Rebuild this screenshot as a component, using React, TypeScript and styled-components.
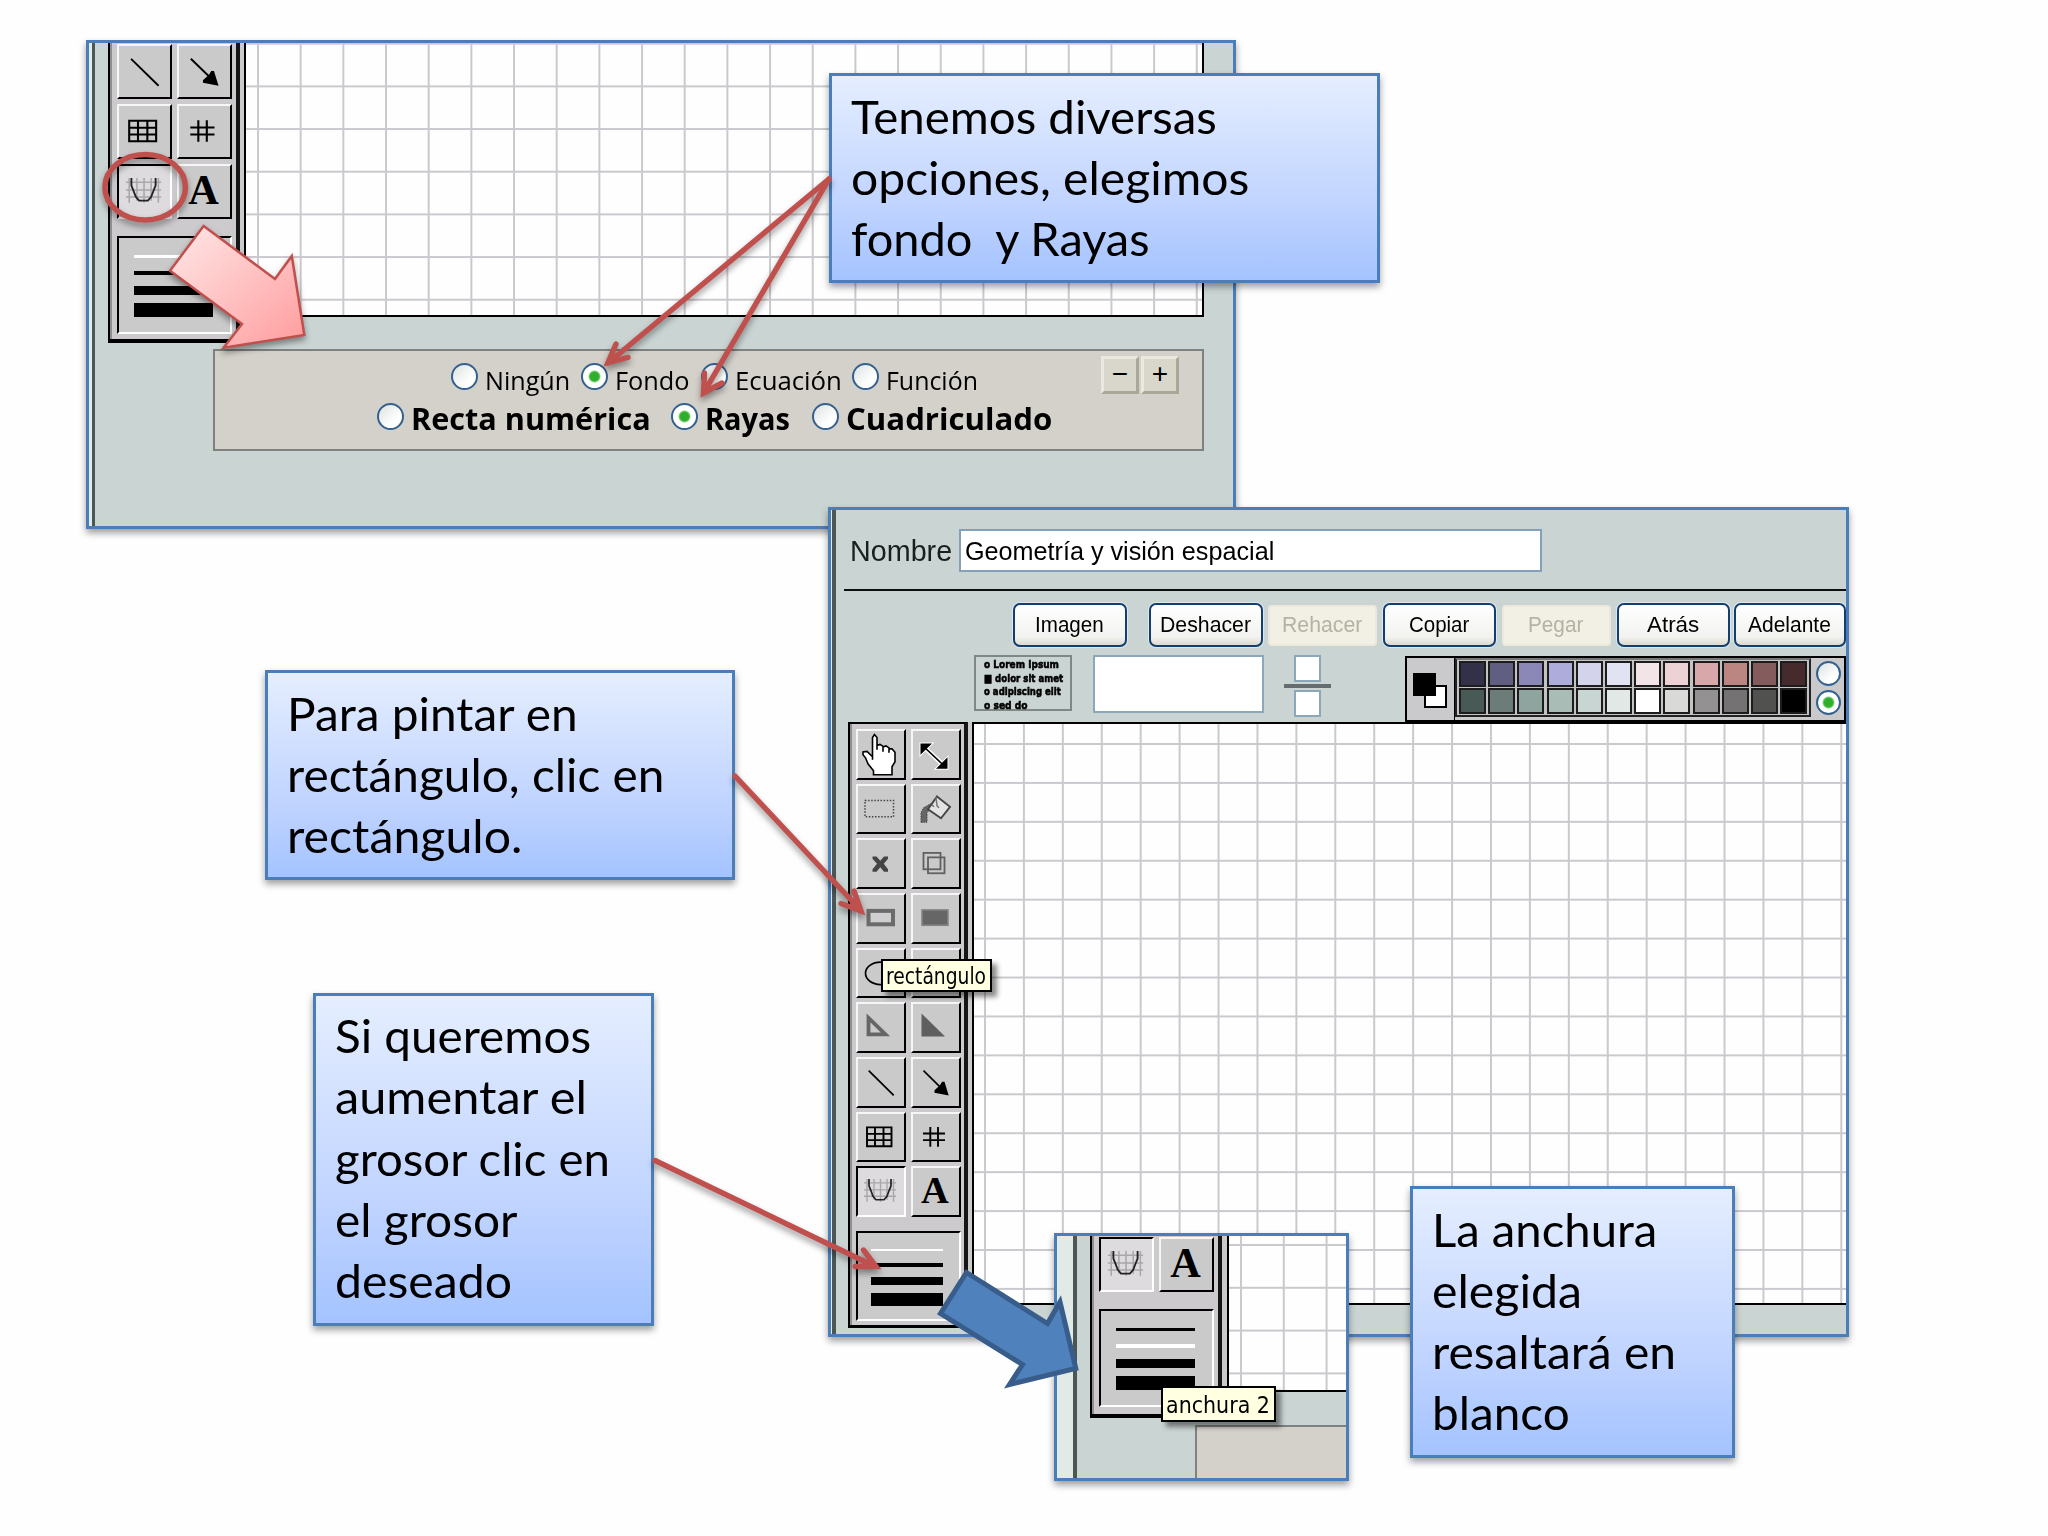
import React, { useLayoutEffect, useRef, useState } from "react";
import styled, { createGlobalStyle, css } from "styled-components";

const GlobalStyle = createGlobalStyle`
  * { box-sizing: border-box; }
  body { margin: 0; background: #fefefe; }
`;

const sans = '"Liberation Sans", Arial, sans-serif';
const humanist = '"Open Sans", "Noto Sans", sans-serif';
const frame = "#4a7ebb";
const red = "#c0504d";

/* ---------- text fitted to a measured width ---------- */

const FitBox = styled.span<{ $w: number }>`
  display: block;
  flex: none;
  width: ${(p) => p.$w}px;
  white-space: pre;
`;

const FitInner = styled.span`
  display: inline-block;
  transform-origin: 0 50%;
`;

function Fit({ w, children }: { w: number; children: string }) {
  const ref = useRef<HTMLSpanElement>(null);
  const [scale, setScale] = useState(1);
  useLayoutEffect(() => {
    const natural = ref.current?.offsetWidth;
    if (natural) setScale(w / natural);
  }, [w, children]);
  return (
    <FitBox $w={w}>
      <FitInner ref={ref} style={{ transform: `scaleX(${scale})` }}>
        {children}
      </FitInner>
    </FitBox>
  );
}

/* ---------- slide and windows ---------- */

const Slide = styled.main`
  position: relative;
  width: 2048px;
  height: 1536px;
  overflow: hidden;
  background: #fefefe;
  color: #000;
  font-family: ${sans};
`;

const Window = styled.section<{ $x: number; $y: number; $w: number; $h: number }>`
  position: absolute;
  left: ${(p) => p.$x}px;
  top: ${(p) => p.$y}px;
  width: ${(p) => p.$w}px;
  height: ${(p) => p.$h}px;
  display: flex;
  border: 3px solid ${frame};
  background: #cad5d3;
  box-shadow: 0 4px 7px rgba(0, 0, 0, 0.38);
  overflow: hidden;
`;

const Rail = styled.div<{ $light: number; $dark: number }>`
  flex: none;
  width: ${(p) => p.$light + p.$dark}px;
  background: #e2eae8;
  border-right: ${(p) => p.$dark}px solid #4b5755;
`;

const Body = styled.div`
  flex: 1;
  min-width: 0;
  display: flex;
  flex-direction: column;
`;

const Workspace = styled.div<{ $pad: number }>`
  flex: none;
  display: flex;
  align-items: flex-start;
  padding-left: ${(p) => p.$pad}px;
`;

const Gutter = styled.div<{ $w: number; $h: number }>`
  flex: none;
  width: ${(p) => p.$w}px;
  height: ${(p) => p.$h}px;
  background: #c9cbca;
`;

const Canvas = styled.div<{
  $w?: number;
  $h: number;
  $pitch: number;
  $ox: number;
  $oy: number;
  $sides: string;
}>`
  ${(p) => (p.$w ? `flex: none; width: ${p.$w}px;` : "flex: 1;")}
  height: ${(p) => p.$h}px;
  border: solid #000;
  border-width: ${(p) => p.$sides};
  background-color: #fefefe;
  background-image: linear-gradient(90deg, #cbc9cd 2px, transparent 2px),
    linear-gradient(#cbc9cd 2px, transparent 2px);
  background-size: ${(p) => p.$pitch}px ${(p) => p.$pitch}px;
  background-position: ${(p) => p.$ox}px 0, 0 ${(p) => p.$oy}px;
`;

/* ---------- toolbox ---------- */

type Size = "full" | "cropped";

const ToolboxFrame = styled.div<{ $size: Size }>`
  flex: none;
  background: #cccacd;
  border: solid #000;
  border-right-color: #151717;
  box-shadow: inset 2px 0 0 #8f8f92;
  ${(p) =>
    p.$size === "full"
      ? css`
          width: 120px;
          height: 606px;
          border-width: 2px 4px 3px 2px;
          padding: 5px 3.5px 0 6px;
        `
      : css`
          width: 132px;
          height: 300px;
          border-width: 0 4px 4px 2px;
          padding: 1px 4.5px 0 7px;
        `}
`;

const ToolGrid = styled.div<{ $size: Size }>`
  display: grid;
  ${(p) =>
    p.$size === "full"
      ? css`
          grid-template-columns: 50px 50px;
          grid-auto-rows: 50.67px;
          gap: 4px 4.5px;
        `
      : css`
          grid-template-columns: 55px 55px;
          grid-auto-rows: 55px;
          gap: 5px 4.5px;
        `}
`;

const ToolButton = styled.button<{ $on?: boolean }>`
  display: block;
  padding: 0;
  border: 2px solid;
  border-color: ${(p) => (p.$on ? "#000 #fff #fff #000" : "#f6f6f6 #000 #000 #f6f6f6")};
  background: ${(p) => (p.$on ? "#dddbde" : "#cacaca")};
  svg {
    display: block;
    margin: -2px -1px -2px -3px;
    width: calc(100% + 4px);
    height: calc(100% + 4px);
  }
`;

const WidthPicker = styled.div<{ $size: Size }>`
  display: flex;
  flex-direction: column;
  align-items: flex-start;
  border: 2px solid;
  border-color: #000 #fff #fff #000;
  background: #cacaca;
  ${(p) =>
    p.$size === "full"
      ? css`
          margin-top: 14px;
          height: 90px;
          padding: 16px 0 0 13px;
          --w: 72px;
          --k: 0.92;
        `
      : css`
          margin-top: 17px;
          height: 98px;
          padding: 17px 0 0 14.5px;
          --w: 79px;
          --k: 1;
        `}
`;

const Stroke = styled.div<{ $h: number; $after: number; $on?: boolean }>`
  flex: none;
  width: var(--w);
  height: calc(${(p) => p.$h}px * var(--k));
  margin-bottom: calc(${(p) => p.$after}px * var(--k));
  background: ${(p) => (p.$on ? "#fff" : "#000")};
`;

const icons: Record<string, React.ReactNode> = {
  hand: (
    <path
      d="M17.5 31V8.5L19.5 5.5L22 8.5V21V16.5L25 15.5L28 17.5V23V18L31 17L34 19V24V20L37 20L40 23.5V33L37 38V46H18.500V42L13 35L10.500 29L8 26V23L12 22.500L17.500 28Z"
      fill="#fff"
      stroke="#000"
      strokeWidth="1.6"
    />
  ),
  resize: (
    <g>
      <path d="M14 18L34 37" stroke="#fff" strokeWidth="4.500" />
      <path d="M10.500 14.500H22L10.500 26ZM37.500 40H26L37.500 28.500Z" fill="#000" stroke="#fff" strokeWidth="2" paintOrder="stroke" />
      <path d="M15 19L33 36" stroke="#000" strokeWidth="1.500" />
    </g>
  ),
  marquee: <rect x="10" y="16.500" width="28.500" height="16.500" fill="none" stroke="#444" strokeWidth="1.500" strokeDasharray="1.500 1.600" />,
  bucket: (
    <g>
      <path d="M11 38.500V29L13.500 24L20.500 20L20 26L17 28.500V38.500Z" fill="#666" stroke="#444" strokeDasharray="1.500 1" />
      <path d="M27 12.500L40 23L31 34.500L18 25.500Z" fill="#e3e3e3" stroke="#444" strokeWidth="1.900" />
      <path d="M26 13L27 22L29 24M22 21L24 23" fill="none" stroke="#777" strokeWidth="1.500" />
    </g>
  ),
  cross: <path d="M17.500 18.500H21.500L25.300 23L29 18.500H33V21L28.800 26L33 31.500V34H29L25.300 29.500L21.500 34H17.500V31.500L22 26L17.500 21Z" fill="#444" />,
  copy: (
    <g fill="none" stroke="#606060" strokeWidth="1.800">
      <rect x="13.500" y="15" width="17" height="16.500" />
      <rect x="18" y="19.500" width="16.500" height="16" />
    </g>
  ),
  rect: <rect x="13.500" y="18" width="24.500" height="13.500" fill="#cfcfcf" stroke="#6b6b6b" strokeWidth="4" />,
  rectFill: <rect x="12" y="17" width="26" height="15.500" fill="#666" stroke="#868686" strokeWidth="1.600" />,
  oval: <ellipse cx="25.500" cy="25.500" rx="15" ry="11.300" fill="none" stroke="#000" strokeWidth="1.700" />,
  ovalFill: <ellipse cx="25.500" cy="25.500" rx="15" ry="11.300" fill="#666" />,
  tri: <path d="M13.500 16V32.700H30.500Z" fill="none" stroke="#666" strokeWidth="3.800" />,
  triFill: <path d="M11.500 11.500V34.700H35Z" fill="#5f5f5f" />,
  line: <path d="M13.700 13.700L38.700 38.700" stroke="#000" strokeWidth="1.700" />,
  arrow: (
    <g>
      <path d="M13.500 13.700L32 32" stroke="#000" strokeWidth="1.700" />
      <path d="M38.700 38.700L24.500 36V33.500L30 28.500L32 25H34.500Z" fill="#000" />
    </g>
  ),
  table: <path d="M12 15.500H36.500V34.500H12ZM20 15V35M28.500 15V35M12 22H37M12 28.300H37" fill="none" stroke="#000" strokeWidth="1.900" />,
  hash: <path d="M20.300 15V35M28 15V35M13 21.700H35M13 28.300H35" fill="none" stroke="#000" strokeWidth="1.900" />,
  curve: (
    <g fill="none">
      <path d="M12 13V36M19 13V34M25.500 13V36M32 13V34M38.500 13V36M9 17H41M9 24H41M9 30.500H41" stroke="#a9a7aa" strokeWidth="1.400" />
      <path d="M14 13V20L16 25L18 30.500L21 34H29L32 30.500L34 25L36 20V13" stroke="#222" strokeWidth="1.700" />
    </g>
  ),
  text: (
    <text x="25" y="37.300" textAnchor="middle" fontFamily='"Liberation Serif", serif' fontWeight="700" fontSize="38.500">
      A
    </text>
  ),
};

const allTools = [
  "hand", "resize", "marquee", "bucket", "cross", "copy", "rect", "rectFill", "oval",
  "ovalFill", "tri", "triFill", "line", "arrow", "table", "hash", "curve", "text",
];

function Toolbox({ size, tools, selected }: { size: Size; tools: string[]; selected: number }) {
  const widths = [
    [2.5, 13],
    [4.5, 10.5],
    [9, 8],
    [14.500, 0],
  ];
  return (
    <ToolboxFrame $size={size}>
      <ToolGrid $size={size}>
        {tools.map((t) => (
          <ToolButton key={t} $on={t === "curve"}>
            <svg viewBox="0 0 50 51" preserveAspectRatio="none">{icons[t]}</svg>
          </ToolButton>
        ))}
      </ToolGrid>
      <WidthPicker $size={size}>
        {widths.map(([h, after], i) => (
          <Stroke key={i} $h={h} $after={after} $on={i === selected} />
        ))}
      </WidthPicker>
    </ToolboxFrame>
  );
}

/* the small window shows only the last row of tools */
const CroppedToolbox = styled.div`
  display: flex;
  flex: none;
  ${ToolboxFrame} {
    height: 182px;
  }
`;

/* ---------- option panel ---------- */

const OptionPanel = styled.div`
  flex: none;
  display: flex;
  width: 991px;
  height: 102px;
  margin: 6px 0 0 118px;
  border: 2px solid #7f8180;
  background: #d4d0ca;
`;

const OptionRows = styled.div`
  flex: none;
  width: 886px;
  padding-top: 5px;
`;

const OptionRow = styled.div<{ $pad: number; $bold?: boolean }>`
  display: flex;
  align-items: center;
  height: 40px;
  padding-left: ${(p) => p.$pad}px;
  font: ${(p) => (p.$bold ? "700 31px" : "400 26px")} / 40px ${humanist};
`;

const Option = styled.label<{ $w: number; $drop: number }>`
  flex: none;
  display: flex;
  align-items: center;
  gap: 7px;
  width: ${(p) => p.$w}px;
  > span:last-child {
    margin-top: ${(p) => p.$drop}px;
  }
`;

const Radio = styled.span<{ $on?: boolean; $d?: number }>`
  flex: none;
  width: ${(p) => p.$d ?? 27}px;
  height: ${(p) => p.$d ?? 27}px;
  border: 2px solid #33618f;
  border-radius: 50%;
  background: ${(p) =>
    p.$on
      ? "radial-gradient(circle, #2fae2a 0 4px, #5cc257 5px, #fff 6.5px)"
      : "linear-gradient(135deg, #dfe2e2, #fff 70%)"};
`;

const Steppers = styled.div`
  display: flex;
  gap: 2px;
  padding-top: 5px;
`;

const Stepper = styled.button`
  width: 38px;
  height: 38px;
  padding: 0 0 3px;
  border: 3px solid;
  border-color: #ebe8df #aaa698 #aaa698 #ebe8df;
  background: #d9d6cb;
  font: 28px / 28px ${sans};
  color: #000;
`;

/* ---------- header of the editor window ---------- */

const NameRow = styled.div`
  flex: none;
  display: flex;
  align-items: center;
  height: 79px;
  padding: 2px 0 0 14px;
  font: 29px ${sans};
  color: #1a1f1e;
  > span {
    padding-top: 2px;
  }
`;

const NameField = styled.div`
  display: flex;
  align-items: center;
  width: 583px;
  height: 43px;
  margin-left: 7px;
  padding: 1px 0 0 4px;
  border: 2px solid #84a0b8;
  background: #fff;
  font-size: 25.500px;
  color: #000;
`;

const Divider = styled.div`
  flex: none;
  height: 2px;
  margin-left: 8px;
  background: #0b0f0e;
`;

const ButtonRow = styled.div`
  flex: none;
  display: flex;
  align-items: center;
  height: 64px;
  padding: 4px 0 0 177px;
`;

const XpButton = styled.button<{ $w: number; $gap: number; $off?: boolean }>`
  flex: none;
  display: flex;
  align-items: center;
  justify-content: center;
  width: ${(p) => p.$w}px;
  height: ${(p) => (p.$off ? 41 : 44)}px;
  margin-left: ${(p) => p.$gap}px;
  padding: 0 2px 0 0;
  border: 2px solid ${(p) => (p.$off ? "#ebe9dc" : "#123f70")};
  border-radius: ${(p) => (p.$off ? 4 : 7)}px;
  background: ${(p) => (p.$off ? "#f2f0e4" : "linear-gradient(#fff, #f2f2ef 80%, #dddacf)")};
  box-shadow: ${(p) => (p.$off ? "none" : "0 0 0 1px rgba(235, 245, 250, 0.6)")};
  color: ${(p) => (p.$off ? "#b4b2a4" : "#000")};
  font: 21.500px / 26px ${sans};
`;

const ToolRow = styled.div`
  flex: none;
  display: flex;
  align-items: flex-start;
  height: 67px;
  padding-left: 138px;
`;

const SampleText = styled.div`
  flex: none;
  width: 98px;
  height: 56px;
  padding: 1px 0 0 8px;
  border: 2px solid #808886;
  font: 700 11px / 13.500px "DejaVu Sans", sans-serif;
  -webkit-text-stroke: 0.6px #000;
`;

const Preview = styled.div`
  flex: none;
  width: 171px;
  height: 58px;
  margin-left: 21px;
  border: 2px solid #8ba7b9;
  background: #fff;
`;

const Fraction = styled.div`
  flex: none;
  display: flex;
  flex-direction: column;
  align-items: center;
  justify-content: space-between;
  width: 47px;
  height: 62px;
  margin-left: 20px;
`;

const FractionBox = styled.div`
  width: 27px;
  height: 27px;
  border: 2px solid #8ba7b9;
  background: #fff;
`;

const FractionBar = styled.div`
  width: 47px;
  height: 4px;
  background: #666d70;
`;

const Palette = styled.div`
  position: relative;
  z-index: 1;
  flex: none;
  display: flex;
  width: 441px;
  height: 68px;
  margin: 1px 0 0 74px;
  border: solid #000;
  border-width: 2px 2px 4px;
  background: #cac9cc;
`;

const InkWell = styled.div`
  flex: none;
  display: flex;
  width: 48px;
  padding: 15px 0 0 6px;
  border-right: 1px solid #000;
`;

const InkChip = styled.div<{ $back?: boolean }>`
  flex: none;
  width: 23px;
  height: 23px;
  border: 2px solid #000;
  background: ${(p) => (p.$back ? "#fff" : "#000")};
  ${(p) => (p.$back ? "margin: 12px 0 0 -12px;" : "position: relative; z-index: 1;")}
`;

const Swatches = styled.div`
  flex: none;
  display: grid;
  grid-template-columns: repeat(12, 27px);
  grid-auto-rows: 26px;
  align-content: start;
  gap: 1px 2.200px;
  width: 356px;
  margin-bottom: 3px;
  padding: 1px 0 0 2px;
  border: 2px solid #222;
  border-top-color: #777;
  background: #c3c3c3;
`;

const Swatch = styled.div<{ $c: string }>`
  border: 2px solid #1c1c1c;
  background: ${(p) => p.$c};
`;

const PaletteModes = styled.div`
  flex: 1;
  display: flex;
  flex-direction: column;
  align-items: center;
  gap: 4px;
  padding: 3px 0 0 1px;
`;

const colors = [
  "#33304a", "#615f81", "#8b88b8", "#aeacda", "#d3d3ec", "#e2e3f2", "#f3e5e7", "#ecd1d5", "#d7a7a9", "#bb8581", "#855c5d", "#452b2d",
  "#495956", "#6c7d79", "#8fa49e", "#a9bcb5", "#c9d5d3", "#e2e8e5", "#ffffff", "#d9dad7", "#949193", "#747273", "#515150", "#000000",
];

const PlainPanel = styled.div`
  flex: 1;
  margin: 7px 0 0 118px;
  border: solid #7f8180;
  border-width: 2px 0 0 2px;
  background: #d4d0ca;
`;

/* ---------- annotations ---------- */

const Callout = styled.aside<{ $x: number; $y: number; $w: number; $h: number }>`
  position: absolute;
  left: ${(p) => p.$x}px;
  top: ${(p) => p.$y}px;
  width: ${(p) => p.$w}px;
  height: ${(p) => p.$h}px;
  padding: 9.500px 0 0 19px;
  border: 3px solid ${frame};
  background: linear-gradient(#e5eeff, #bfd3ff 65%, #a4c3ff);
  box-shadow: 0 4px 7px rgba(0, 0, 0, 0.38);
  font: 46px / 61.300px Lato, Carlito, sans-serif;
`;

const Tooltip = styled.div<{ $x: number; $y: number; $w: number; $h: number }>`
  position: absolute;
  left: ${(p) => p.$x}px;
  top: ${(p) => p.$y}px;
  width: ${(p) => p.$w}px;
  height: ${(p) => p.$h}px;
  display: flex;
  align-items: center;
  padding: 1px 0 0 3px;
  border: 2px solid #000;
  background: #ffffe1;
  box-shadow: 5px 5px 5px rgba(0, 0, 0, 0.45);
  font: 23px / 28px "DejaVu Sans", sans-serif;
`;

const Overlay = styled.svg`
  position: absolute;
  inset: 0;
  width: 2048px;
  height: 1536px;
  pointer-events: none;
`;

function Annotations() {
  return (
    <Overlay viewBox="0 0 2048 1536">
      <defs>
        <linearGradient id="pink" x1="0" y1="0" x2="1" y2="1">
          <stop offset="0" stopColor="#ffe8e8" />
          <stop offset="0.45" stopColor="#ffc6c6" />
          <stop offset="1" stopColor="#ff9c9e" />
        </linearGradient>
        <filter id="shadow" filterUnits="userSpaceOnUse" x="0" y="0" width="2048" height="1536" colorInterpolationFilters="sRGB">
          <feDropShadow dx="0" dy="4" stdDeviation="3" floodOpacity="0.4" />
        </filter>
      </defs>
      <g filter="url(#shadow)" fill="none" stroke={red}>
        <ellipse cx="145.200" cy="187.300" rx="40.300" ry="32.700" strokeWidth="5.500" />
        <path
          d="M203.600 226L275 279L291.800 256L304.300 335L223.600 347.700L242 324L170 270.700Z"
          fill="url(#pink)"
          strokeWidth="2.500"
        />
        <g strokeWidth="5.400" strokeLinecap="round" strokeLinejoin="miter">
          <path d="M829 179L608 363M616 344L608 362.500L628 357.500" />
          <path d="M829 179L703.500 393M704.500 373L703.500 393L722 383" />
          <path d="M735 776L860.500 910M854 891L861 911L841 903.500" />
          <path d="M655 1160.500L875 1266.500M863.500 1250L876 1266.500L855 1266.500" />
        </g>
      </g>
      <path
        d="M966.500 1272.500L1047.500 1323.500L1060 1302L1075.800 1368.500L1009.500 1384.500L1022.500 1364.500L940.500 1313.500Z"
        fill="#4f81bd"
        stroke="#385d8a"
        strokeWidth="5"
      />
    </Overlay>
  );
}

export default function App() {
  return (
    <Slide>
      <GlobalStyle />

      <Window $x={86} $y={40} $w={1150} $h={489}>
        <Rail $light={3} $dark={3} />
        <Body>
          <Workspace $pad={13}>
            <Toolbox size="cropped" tools={allTools.slice(12)} selected={0} />
            <Gutter $w={4} $h={274} />
            <Canvas $w={960} $h={274} $pitch={42.68} $ox={11} $oy={-0.3} $sides="0 2px 2px" />
          </Workspace>
          <OptionPanel>
            <OptionRows>
              <OptionRow $pad={236}>
                <Option $w={130} $drop={8}><Radio /><Fit w={85}>Ningún</Fit></Option>
                <Option $w={119.500} $drop={8}><Radio $on /><Fit w={75}>Fondo</Fit></Option>
                <Option $w={151.500} $drop={8}><Radio /><Fit w={107}>Ecuación</Fit></Option>
                <Option $w={140} $drop={8}><Radio /><Fit w={92}>Función</Fit></Option>
              </OptionRow>
              <OptionRow $pad={161.500} $bold>
                <Option $w={294.500} $drop={4}><Radio /><Fit w={240}>Recta numérica</Fit></Option>
                <Option $w={141} $drop={4}><Radio $on /><Fit w={85}>Rayas</Fit></Option>
                <Option $w={260} $drop={4}><Radio /><Fit w={206}>Cuadriculado</Fit></Option>
              </OptionRow>
            </OptionRows>
            <Steppers>
              <Stepper>−</Stepper>
              <Stepper>+</Stepper>
            </Steppers>
          </OptionPanel>
        </Body>
      </Window>

      <Window $x={828} $y={507} $w={1021} $h={830}>
        <Rail $light={1} $dark={4} />
        <Body>
          <NameRow>
            <Fit w={102}>Nombre</Fit>
            <NameField><Fit w={309}>Geometría y visión espacial</Fit></NameField>
          </NameRow>
          <Divider />
          <ButtonRow>
            <XpButton $w={114} $gap={0}><Fit w={69}>Imagen</Fit></XpButton>
            <XpButton $w={114} $gap={22}><Fit w={91}>Deshacer</Fit></XpButton>
            <XpButton $w={109} $gap={5} $off><Fit w={80}>Rehacer</Fit></XpButton>
            <XpButton $w={113} $gap={6}><Fit w={60}>Copiar</Fit></XpButton>
            <XpButton $w={109} $gap={6} $off><Fit w={55}>Pegar</Fit></XpButton>
            <XpButton $w={113} $gap={6}><Fit w={52}>Atrás</Fit></XpButton>
            <XpButton $w={112} $gap={4}><Fit w={83}>Adelante</Fit></XpButton>
          </ButtonRow>
          <ToolRow>
            <SampleText>
              <Fit w={75}>o Lorem Ipsum</Fit>
              <Fit w={79}>■ dolor sit amet</Fit>
              <Fit w={77}>o adipiscing elit</Fit>
              <Fit w={44}>o sed do</Fit>
            </SampleText>
            <Preview />
            <Fraction>
              <FractionBox />
              <FractionBar />
              <FractionBox />
            </Fraction>
            <Palette>
              <InkWell>
                <InkChip />
                <InkChip $back />
              </InkWell>
              <Swatches>
                {colors.map((c) => (
                  <Swatch key={c} $c={c} />
                ))}
              </Swatches>
              <PaletteModes>
                <Radio $d={25} />
                <Radio $d={25} $on />
              </PaletteModes>
            </Palette>
          </ToolRow>
          <Workspace $pad={12}>
            <Toolbox size="full" tools={allTools} selected={0} />
            <Gutter $w={4} $h={583} />
            <Canvas $h={583} $pitch={38.93} $ox={10} $oy={19} $sides="2px 0 2px 2px" />
          </Workspace>
        </Body>
      </Window>

      <Window $x={1054} $y={1233} $w={295} $h={248}>
        <Rail $light={16} $dark={4} />
        <Body>
          <Workspace $pad={13}>
            <CroppedToolbox>
              <Toolbox size="cropped" tools={["curve", "text"]} selected={1} />
            </CroppedToolbox>
            <Gutter $w={5} $h={156} />
            <Canvas $h={156} $pitch={42.8} $ox={11} $oy={8} $sides="0 0 2px 2px" />
          </Workspace>
          <PlainPanel />
        </Body>
      </Window>

      <Callout $x={829} $y={73} $w={551} $h={210}>
        <Fit w={366}>Tenemos diversas</Fit>
        <Fit w={398}>opciones, elegimos</Fit>
        <Fit w={299}>fondo  y Rayas</Fit>
      </Callout>
      <Callout $x={265} $y={670} $w={470} $h={209.5}>
        <Fit w={291}>Para pintar en</Fit>
        <Fit w={377}>rectángulo, clic en</Fit>
        <Fit w={235}>rectángulo.</Fit>
      </Callout>
      <Callout $x={313} $y={992.5} $w={341} $h={333.5}>
        <Fit w={256}>Si queremos</Fit>
        <Fit w={252}>aumentar el</Fit>
        <Fit w={275}>grosor clic en</Fit>
        <Fit w={182}>el grosor</Fit>
        <Fit w={177}>deseado</Fit>
      </Callout>
      <Callout $x={1410} $y={1186} $w={325} $h={271.5}>
        <Fit w={225}>La anchura</Fit>
        <Fit w={150}>elegida</Fit>
        <Fit w={244}>resaltará en</Fit>
        <Fit w={138}>blanco</Fit>
      </Callout>

      <Tooltip $x={881} $y={959} $w={111} $h={33}><Fit w={100}>rectángulo</Fit></Tooltip>
      <Tooltip $x={1161} $y={1386} $w={115} $h={36}><Fit w={104}>anchura 2</Fit></Tooltip>
      <Annotations />
    </Slide>
  );
}
